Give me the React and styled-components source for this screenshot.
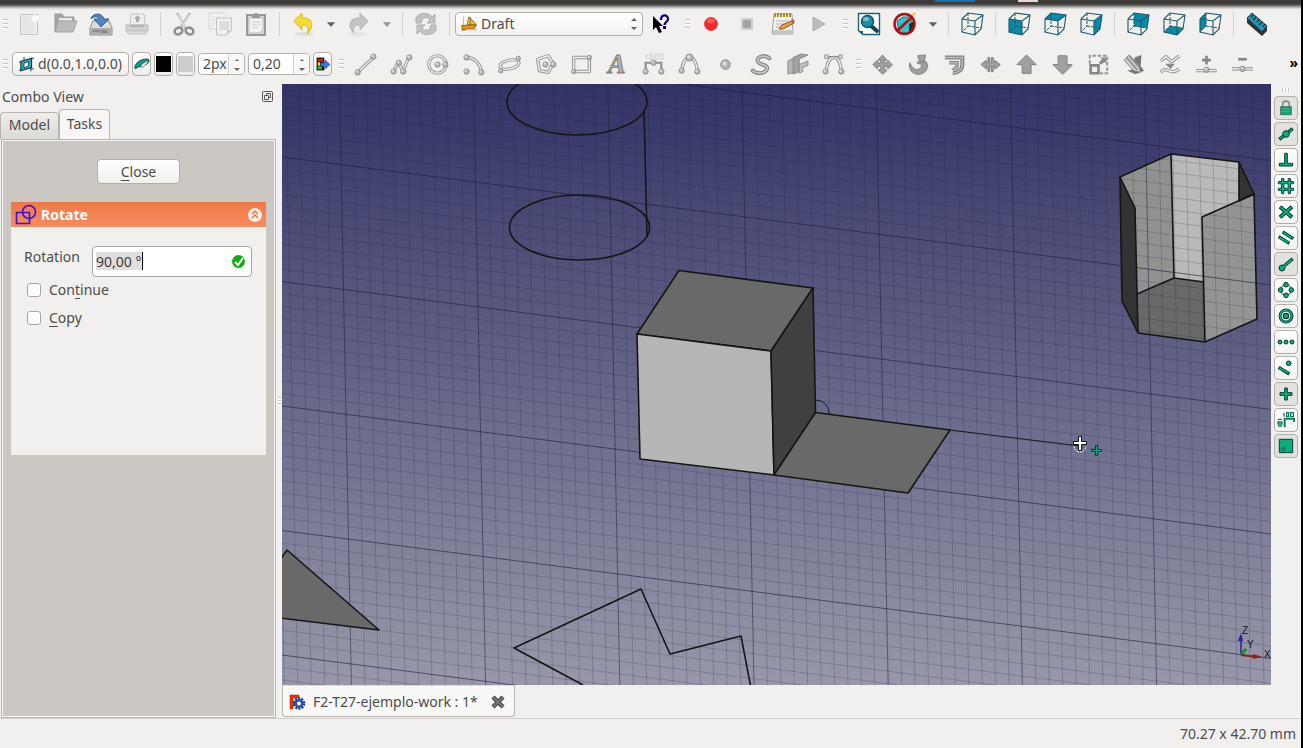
import React from 'react'
import styled, { createGlobalStyle } from 'styled-components'

const GlobalStyle = createGlobalStyle`
  * {
    box-sizing: border-box;
  }

  body {
    margin: 0;
    background: #f1f0ee;
    color: #4c4c4c;
    font: 14px/20px 'Noto Sans', 'Open Sans', sans-serif;
  }

  button, input, select {
    margin: 0;
    padding: 0;
    color: inherit;
    font: inherit;
  }
`

const Page = styled.div`
  display: flex;
  flex-direction: column;
  min-height: 100vh;
  border-right: 2px solid #000;
`

const WindowEdge = styled.header`
  display: flex;
  height: 10px;
  margin-bottom: -4px;
  padding: 0 263px 0 0;
  justify-content: flex-end;
  background: linear-gradient(#3c3b37 4px, #7d7c79 6px, #d0cfcd 8px, #f1f0ee 10px);
`

const EdgeMark = styled.span`
  width: ${props => props.width}px;
  height: 2px;
  margin-left: ${props => props.gap || 0}px;
  background: ${props => props.color};
`

const Toolbars = styled.div`
  display: flex;
  align-items: center;
  height: ${props => props.height}px;
  padding-top: ${props => props.$drop || 0}px;
  gap: ${props => props.gap}px;
`

const ToolGroup = styled.div`
  display: flex;
  align-items: center;
`

const Handle = styled.span`
  flex: none;
  width: 5px;
  height: 11px;
  margin: 0 3px;
  background: repeating-linear-gradient(#c4c2bf 0 1px, #fff 1px 2px, transparent 2px 4px);
`

const Separator = styled.span`
  flex: none;
  width: 1px;
  height: 24px;
  margin: 0 5px;
  background: #d5d3d0;
`

const ToolButton = styled.button`
  display: flex;
  flex: none;
  align-items: center;
  justify-content: center;
  width: ${props => props.$narrow ? 20 : 36}px;
  height: 36px;
  border: 0;
  background: none;
`

const Svg = styled.svg`
  display: block;
  flex: none;
  overflow: visible;
`

const Combo = styled.label`
  display: flex;
  align-items: center;
  width: 188px;
  height: 24px;
  padding: 0 5px;
  gap: 4px;
  border: 1px solid #b3afaa;
  border-radius: 4px;
  background: linear-gradient(#fff, #f3f2f1);

  select {
    flex: 1;
    border: 0;
    appearance: none;
    background: none;
    outline: 0;
  }
`

const DraftOptions = styled.div`
  display: flex;
  align-items: center;
  gap: 3px;
  margin: 0 2px 0 1px;
`

const OptionButton = styled.button`
  display: flex;
  align-items: center;
  justify-content: center;
  width: ${props => props.width || 19}px;
  height: 24px;
  gap: 4px;
  border: 1px solid #b3afaa;
  border-radius: 4px;
  background: linear-gradient(#fff, #eeedeb);
  white-space: nowrap;
`

const Swatch = styled.span`
  width: 15px;
  height: 16px;
  background: ${props => props.color};
`

const Spin = styled.div`
  display: flex;
  width: ${props => props.width}px;
  height: 22px;
  border: 1px solid #b3afaa;
  border-radius: 4px;
  background: #fff;
  overflow: hidden;

  input {
    flex: 1;
    min-width: 0;
    padding-left: 4px;
    border: 0;
    background: none;
    outline: 0;
  }
`

const Stepper = styled.div`
  display: flex;
  flex-direction: column;
  width: 16px;
  border-left: 1px solid #d5d3d0;
  background: #f8f7f6;

  button {
    display: flex;
    flex: 1;
    align-items: center;
    justify-content: center;
    border: 0;
    background: none;
  }
`

const MoreButton = styled.button`
  margin-left: auto;
  padding: 0 3px 2px;
  border: 0;
  background: none;
  color: #000;
  font-weight: bold;
`

const Workspace = styled.main`
  display: flex;
  flex: 1;
`

const Sidebar = styled.aside`
  display: flex;
  flex-direction: column;
  width: 276px;
`

const SidebarTitle = styled.div`
  display: flex;
  align-items: center;
  justify-content: space-between;
  height: 25px;
  padding: 0 3px 0 2px;
`

const DockButton = styled.button`
  display: flex;
  border: 0;
  background: none;
`

const Tabs = styled.div`
  display: flex;
  align-items: flex-end;
  height: 30px;
`

const Tab = styled.button`
  width: ${props => props.$active ? 51 : 59}px;
  height: ${props => props.$active ? 31 : 27}px;
  margin-bottom: ${props => props.$active ? -1 : 0}px;
  padding-bottom: 2px;
  border: 1px solid #b8b4b0;
  border-bottom: 0;
  border-radius: 4px 4px 0 0;
  background: ${props => props.$active ? '#f7f6f5' : 'linear-gradient(#eeedeb, #dcdad7)'};
`

const Pane = styled.section`
  display: flex;
  flex: 1;
  flex-direction: column;
  margin-left: 1px;
  padding: 19px 8px;
  align-items: stretch;
  border: 1px solid #b8b4b0;
  box-shadow: inset 0 0 0 1px #f7f6f5;
  background: #cbc8c4;
`

const CloseButton = styled.button`
  align-self: center;
  width: 83px;
  height: 25px;
  border: 1px solid #b3afaa;
  border-radius: 4px;
  background: linear-gradient(#fff, #f1f0ee);

  span {
    text-decoration: underline;
    text-underline-offset: 3px;
  }
`

const TaskBox = styled.div`
  height: 253px;
  margin: 18px 1px 0;
  background: #f1f0ee;
`

const TaskHeader = styled.div`
  display: flex;
  align-items: center;
  height: 25px;
  padding: 0 3px 0 4px;
  gap: 4px;
  background: linear-gradient(#f07746, #f68c62);
  color: #fff;
  font-weight: bold;

  button {
    display: flex;
    margin-left: auto;
    border: 0;
    background: none;
  }
`

const TaskForm = styled.form`
  display: grid;
  padding: 19px 14px 0 13px;
`

const Field = styled.div`
  display: flex;
  justify-content: space-between;
  height: 30px;
  line-height: 22px;
`

const AngleBox = styled.div`
  display: flex;
  align-items: center;
  width: 160px;
  height: 31px;
  padding: 0 5px 0 3px;
  border: 1px solid #aaa7a2;
  border-radius: 4px;
  background: #fff;

  input {
    flex: 1;
    min-width: 0;
    border: 0;
    outline: 0;
    color: #3c3c3c;
    background: linear-gradient(#000, #000) 46px 1px / 1px 18px no-repeat, linear-gradient(#e0dfdd, #e0dfdd) 0 1px / 46px 18px no-repeat;
  }
`

const Check = styled.label`
  display: flex;
  align-items: center;
  height: 28px;
  padding-left: 3px;
  gap: 8px;

  input {
    width: 14px;
    height: 14px;
    appearance: none;
    border: 1px solid #a9a6a2;
    border-radius: 3px;
    background: #fff;
  }

  span span {
    text-decoration: underline;
    text-underline-offset: 3px;
  }
`

const Splitter = styled.div`
  display: flex;
  align-items: center;
  justify-content: center;
  width: 6px;

  &::after {
    content: '';
    width: 3px;
    height: 9px;
    background: repeating-linear-gradient(#c4c2bf 0 1px, #fff 1px 3px);
  }
`

const Documents = styled.div`
  display: flex;
  flex: 1;
  flex-direction: column;
  min-width: 0;
`

const Viewport = styled.svg`
  display: block;
  flex: 1;
  width: 100%;
  min-height: 601px;
  background: linear-gradient(#333366, #9898aa);
`

const DocTab = styled.div`
  display: flex;
  align-items: center;
  width: 233px;
  height: 32px;
  margin-bottom: 1px;
  padding: 2px 9px 0 6px;
  border: 1px solid #b8b4b0;
  border-top-color: #dcdad7;
  border-radius: 0 0 4px 4px;
  background: #f8f8f7;
  white-space: nowrap;

  span {
    margin-left: 8px;
  }

  button {
    display: flex;
    margin-left: auto;
    border: 0;
    background: none;
  }
`

const SnapBar = styled.nav`
  display: flex;
  flex-direction: column;
  align-items: center;
  width: 30px;
  gap: 2px;
`

const SnapHandle = styled.span`
  width: 8px;
  height: 4px;
  margin: 4px 0 2px;
  background: repeating-linear-gradient(90deg, #c4c2bf 0 1px, #fff 1px 3px);
`

const SnapButton = styled.button`
  display: flex;
  align-items: center;
  justify-content: center;
  width: 24px;
  height: 24px;
  border: 1px solid #b3afaa;
  border-radius: 4px;
  background: ${props => props.$on ? '#e3e1de' : 'linear-gradient(#fff, #f5f4f3)'};
`

const StatusBar = styled.footer`
  height: 30px;
  padding: 5px 5px 4px;
  border-top: 1px solid #d3d0cd;
  text-align: right;
`

const Icon = ({ size = 24, children }) => (
  <Svg width={size} height={size} viewBox='0 0 24 24' fill='none' aria-hidden='true'>
    {children}
  </Svg>
)

// a shaded ball that marks a control point of a draft tool
const Ball = ({ x, y, r = 3 }) => (
  <g>
    <circle cx={x} cy={y} r={r} fill='#b9b9b9' stroke='#858585' />
    <circle cx={x - 1} cy={y - 1} r={r / 2.5} fill='#e6e6e6' />
  </g>
)

// double outline: dark below, light core above
const Tube = ({ d }) => (
  <g strokeLinejoin='round'>
    <path d={d} stroke='#949494' strokeWidth='3.8' />
    <path d={d} stroke='#eee' strokeWidth='1.6' />
  </g>
)

const Solid = ({ d, fill = '#a0a0a0' }) => (
  <g>
    <path d={d} fill='#c8c8c8' transform='translate(1 1)' />
    <path d={d} fill={fill} stroke='#7d7d7d' />
  </g>
)

const Arrow = ({ color = '#66645f' }) => <Icon size={10}><path d='M2 8h20L12 19z' fill={color} /></Icon>

const UpDown = () => (
  <Svg width='6' height='12' viewBox='0 0 6 12' fill='#66645f' aria-hidden='true'>
    <path d='M0 3 3 0l3 3zM0 9l3 3 3-3z' />
  </Svg>
)

const cubeFaces = {
  axo: '',
  front: 'M2 7 15 9V23L2 20z',
  top: 'M2 7 8 1 23 3 15 9z',
  right: 'M15 9 23 3 21 17 15 23z',
  rear: 'M8 1 23 3 21 16 8 14z',
  bottom: 'M2 20 8 14 21 16 15 23z',
  left: 'M2 7 8 1V14L2 20z'
}

const Cube = ({ face }) => (
  <Icon>
    <path d={cubeFaces[face]} fill='#078ba8' />
    <path d='M2 7 8 1 23 3 21 17 15 23 2 20zM2 7 15 9 23 3M15 9V23' stroke='#1d5a68' strokeWidth='1.1' />
    <path d='M8 1V14L2 20M8 14 21 16' stroke='#1d5a68' strokeDasharray='3 1' />
  </Icon>
)

const icons = {
  new: (
    <>
      <path d='M3.5 2.5h17v20h-17z' fill='#eee' stroke='#c4c4c4' />
      <path d='M5 4h12v17H5z' fill='#e6e6e6' />
      <circle cx='18' cy='6' r='3.5' fill='#fafafa' />
    </>
  ),
  open: (
    <>
      <path d='M2 20V2h7l2 3h10v6' fill='#a6a6a6' stroke='#999' />
      <path d='M6 6h13v6H6z' fill='#e6e6e6' />
      <path d='M2 20 5 9h19l-4 11z' fill='#bbb' stroke='#a0a0a0' />
    </>
  ),
  save: (
    <>
      <path d='M4 9h16l3 7v7H1v-7z' fill='#dcdedb' stroke='#8a8c89' />
      <path d='M2 16h20v6H2z' fill='#aaaca9' />
      <path d='M4 19h7M13 18v3M15 18v3M17 18v3' stroke='#666' />
      <path d='M2 7C3 1 13 0 15 7h5l-8 8-7-8h5C8 4 5 4 2 7z' fill='#5583bd' stroke='#33619b' />
    </>
  ),
  print: (
    <>
      <path d='M6 2h13l1 11H5z' fill='#efefef' stroke='#c3c3c3' />
      <path d='M11 10V7H9l3.500-4L16 7h-2v3z' fill='#aaa' />
      <path d='M1 13h22v6H1z' fill='#d2d2d2' stroke='#bbb' />
      <path d='M5 14h14' stroke='#999' />
      <path d='M2 19h20l-1 3H3z' fill='#dedede' stroke='#c2c2c2' />
    </>
  ),
  cut: (
    <>
      <path d='M5 1 14 17M18 1 8 17' stroke='#b9b9b9' strokeWidth='2.500' />
      <path d='M5.500 3 13 15M17.500 3 10 15' stroke='#eee' />
      <ellipse cx='6.500' cy='19' rx='4' ry='3.300' stroke='#8f8f8f' strokeWidth='2.500' transform='rotate(-25 6.500 19)' />
      <ellipse cx='17.500' cy='19' rx='4' ry='3.300' stroke='#8f8f8f' strokeWidth='2.500' transform='rotate(25 17.500 19)' />
    </>
  ),
  copy: (
    <>
      <path d='M1 1h15v16H1z' fill='#f4f4f4' stroke='#d4d4d4' />
      <path d='M3 5h10M3 8h5M3 11h4M3 14h4' stroke='#ddd' />
      <path d='M8.500 6h15v12l-5 5h-10z' fill='#f1f1f1' stroke='#c3c3c3' />
      <path d='M11 9h10v9H11z' fill='#ddd' />
      <path d='m18 23 1-5h5z' fill='#ccc' />
    </>
  ),
  paste: (
    <>
      <path d='M3 3h18v20H3z' fill='#d8d8d8' stroke='#999' strokeWidth='2' />
      <path d='M5 6h14v12l-4 3H5z' fill='#f4f4f4' stroke='#bbb' />
      <path d='M8 10h9M8 13h9M8 16h6' stroke='#ccc' />
      <path d='M8 5V3h2l1-2h2l1 2h2v3H8z' fill='#999' />
    </>
  ),
  undo: (
    <>
      <ellipse cx='13' cy='22' rx='9' ry='2' fill='#e2e0dd' />
      <path d='M3 9 11 1v5c12-1 12 10 5 16 2-7 1-9-5-9v5z' fill='#f4dc35' stroke='#d6bb2a' />
    </>
  ),
  redo: (
    <>
      <ellipse cx='10' cy='22' rx='9' ry='2' fill='#e5e4e1' />
      <path d='M21 9 13 1v5C1 5 1 16 7 21c-1-6 0-8 6-8v5z' fill='#c4c4c4' stroke='#b8b8b8' />
    </>
  ),
  refresh: (
    <>
      <path d='M2 11V6C6-1 16 1 18 5l3-3v9h-8l3-3C13 4 8 5 7 11z' fill='#c2c2c2' stroke='#adadad' />
      <path d='M22 13v5c-4 7-14 5-16 1l-3 3v-9h8l-3 3c3 4 8 3 9-3z' fill='#c2c2c2' stroke='#adadad' />
    </>
  ),
  help: (
    <g transform='translate(3 2)'>
      <path d='M1 2v14l3-3 3 6 3-1-3-6h4z' fill='#000' />
      <path d='M9 6c0-6 7-6 7-1 0 3-3.500 3-3.500 6' stroke='#000082' strokeWidth='2.200' />
      <path d='M11 12h3v3h-3z' fill='#000082' />
    </g>
  ),
  record: (
    <>
      <circle cx='12' cy='12' r='6.500' fill='#ef2929' stroke='#e84a4a' />
      <ellipse cx='12' cy='9' rx='4' ry='2.500' fill='#f55' />
    </>
  ),
  stop: <path d='M7 7h10v10H7z' fill='#a5a5a5' stroke='#d0d0d0' strokeWidth='2' />,
  edit: (
    <>
      <path d='M3 2h18l1 20H1z' fill='#f0f0ee' stroke='#a3a3a0' />
      <path d='M2 18h20v4H2z' fill='#c7c7c4' />
      <path d='M3 3h18' stroke='#a49523' strokeWidth='4' strokeDasharray='2 1' />
      <path d='M5 9h13M5 12h8M5 15h7' stroke='#b5b5b5' />
      <path d='m8 17 3-4 10-4 2 2-11 6z' fill='#f0a33d' stroke='#80552a' />
      <path d='m20 8 2-1 2 3-2 1z' fill='#d44' />
    </>
  ),
  play: <path d='M6 5 18 12 6 19z' fill='#bdbdbd' stroke='#adadad' />,
  fit: (
    <>
      <path d='M1.500 1.500h21v21H6l-4.500-4z' fill='#fff' stroke='#1b6274' strokeWidth='1.400' />
      <path d='M1 19h5v4z' fill='#1b6274' />
      <path d='m13 13 7 6' stroke='#0a4757' strokeWidth='4' strokeLinecap='round' />
      <circle cx='10.500' cy='9.500' r='6' fill='#1b8da6' stroke='#0c5566' strokeWidth='1.500' />
      <ellipse cx='9' cy='7' rx='3' ry='2' fill='#79c3d2' />
    </>
  ),
  nodraw: (
    <>
      <path d='M4 9 10 5h9v10l-4 6H6z' fill='#26c5cf' stroke='#13757d' />
      <path d='m16 12 5-3v9l-5 4z' fill='#222' />
      <path d='m14 9 8-8' stroke='#e8c434' strokeWidth='2' />
      <circle cx='11.500' cy='12' r='10' stroke='#b90b10' strokeWidth='2.500' />
      <path d='m19 5-15 14' stroke='#b90b10' strokeWidth='2.500' />
    </>
  ),
  ruler: (
    <>
      <path d='m2 7 5-5 15 13v4l-5 5L2 11z' fill='#333' />
      <path d='m2 6 5-5 15 13-5 6z' fill='#2794b3' stroke='#163944' />
      <path d='m8 3-2 2m5 0-3 3m6 0-2 2m5 0-3 3m6-1-2 3' stroke='#072a34' strokeWidth='1.300' />
    </>
  ),
  draft: (
    <>
      <path d='M4 1v22M0 21h24' stroke='#b9b7b2' strokeWidth='1.500' />
      <path d='M9 13 12 1l11 12z' fill='#f4c613' stroke='#57501a' />
      <path d='M14 2v12' stroke='#57501a' />
      <path d='M1 14h22l-3 5H8l-2 2H2z' fill='#ee9113' stroke='#7c480a' />
    </>
  ),
  plane: (
    <>
      <path d='M3 7 20 2v15L3 22z' fill='#2fb2ad' stroke='#14414c' strokeWidth='2' />
      <path d='m8 10 7-3v7l-7 4z' fill='#fff' stroke='#14414c' strokeWidth='1.500' />
      <path d='M0 8h3M8 0v6M0 21h4M19 19h5M20 2h4M19 17v6' stroke='#14414c' strokeWidth='1.500' />
    </>
  ),
  construction: (
    <>
      <path d='M1 17C3 8 14 3 22 5c2 5-3 8-7 8l-4 3c-3-1-5 1-9 3z' fill='#159b83' stroke='#125044' strokeWidth='1.500' />
      <path d='m12 12 7-4 3 1-9 8-3-1z' fill='#fff' stroke='#125044' />
    </>
  ),
  apply: (
    <>
      <path d='M1 1h13v22H1z' fill='#111' />
      <path d='M3 3h9v5H3z' fill='#e01616' />
      <path d='M3 9h4v6H3z' fill='#e5d91e' />
      <path d='M3 16h7v5H3z' fill='#25c835' />
      <path d='M8 10h7V5l9 8-9 8v-5H8z' fill='#3c79dc' stroke='#15367b' />
    </>
  ),
  line: <><Tube d='M4 20 21 4' /><Ball x={3} y={21} /><Ball x={21} y={3} /></>,
  wire: <><Tube d='M3 20 8 10 14 19 20 4' /><Ball x={3} y={20} /><Ball x={9} y={10} /><Ball x={14} y={20} /><Ball x={21} y={4} /></>,
  circle: <><circle cx='12' cy='12' r='10' stroke='#929292' strokeWidth='3.600' /><circle cx='12' cy='12' r='10' stroke='#eee' strokeWidth='1.600' /><Ball x={12} y={12} /><Ball x={21} y={12} /></>,
  arc: <><Tube d='M4 4c10 0 16 8 17 16' /><Ball x={4} y={4} /><Ball x={4} y={20} /><Ball x={21} y={21} /></>,
  ellipse: <><ellipse cx='12' cy='12' rx='11' ry='5' stroke='#929292' strokeWidth='3.600' transform='rotate(-12 12 12)' /><ellipse cx='12' cy='12' rx='11' ry='5' stroke='#eee' strokeWidth='1.600' transform='rotate(-12 12 12)' /><Ball x={2} y={19} r={2.5} /><Ball x={22} y={5} r={2.5} /></>,
  polygon: <><Tube d='M3 6 15 2 21 11 15 21 5 19z' /><Ball x={12} y={12} /><Ball x={21} y={12} /></>,
  rect: <><Tube d='M3 4h18v16H3z' /><Ball x={3} y={20} r={2.5} /><Ball x={21} y={4} r={2.5} /></>,
  text: <text x='1' y='22' fontFamily='Liberation Serif, serif' fontSize='30' fontWeight='bold' fontStyle='italic' fill='#b4b4b4' stroke='#777'>A</text>,
  dimension: <><path d='M3 21V10h18v11' stroke='#909090' strokeWidth='2.500' /><path d='M4 0v6m4-6h3v6H8zm6 0h3v6h-3zm6 0h3v6h-3z' stroke='#c9c9c9' /><Ball x={3} y={20} /><Ball x={21} y={20} /><Ball x={12} y={10} /></>,
  bspline: <><Tube d='M3 19C4 12 6 4 12 4s8 8 9 15' /><Ball x={3} y={19} /><Ball x={12} y={4} r={4} /><Ball x={21} y={20} /></>,
  point: <><circle cx='12' cy='12' r='5.500' fill='#b0b0b0' stroke='#8b8b8b' /><circle cx='11' cy='11' r='2.500' fill='#dedede' /></>,
  shape: (
    <g strokeLinecap='round'>
      <path d='M21 5C16 0 5 3 8 9c2 4 13 3 10 9-3 5-12 5-16 1' stroke='#808080' strokeWidth='4.500' />
      <path d='M21 5C16 0 5 3 8 9c2 4 13 3 10 9-3 5-12 5-16 1' stroke='#c9c9c9' strokeWidth='2' />
    </g>
  ),
  face: <><path d='M1 8 13 2v18L1 23z' fill='#b6b6b6' stroke='#888' /><path d='m7 4 9-4 8 1-10 5v14l-7 3z' fill='#a2a2a2' stroke='#888' /><path d='m14 12 10-4v5l-6 2v5l-4 2z' fill='#c1c1c1' stroke='#888' /></>,
  bezier: <><Tube d='M3 20C5 14 5 5 12 4s8 9 9 15' /><path d='M5 3h14' stroke='#8b8b8b' strokeWidth='1.500' /><path d='M2 1h4v4H2zM18 1h4v4h-4z' fill='#ddd' stroke='#8b8b8b' /><Ball x={3} y={20} /><Ball x={21} y={20} /></>,
  move: <Solid d='m12 1 5 6h-3v3h4V7l5 5-5 5v-3h-4v4h3l-5 5-5-5h3v-4H6v3l-5-5 5-5v3h4V7H7z' />,
  rotate: <Solid d='m11 2 9-1-2 9-3-2c-1 0-1 1-1 2h2c3-1 4-2 5-1 4 7-3 14-9 14C5 23 0 18 2 10c3 7 7 9 11 7 3-2 3-5 1-6-2 0-3 0-4-1l3-3z' />,
  offset: <><path d='M1 4h20v8c0 6-5 10-11 10' stroke='#808080' strokeWidth='4.500' /><path d='M6 10h9v3c0 3-3 5-5 3' stroke='#808080' strokeWidth='4' /><path d='M1 4h20v8c0 6-5 10-11 10M6 10h9v3c0 3-3 5-5 3' stroke='#bbb' strokeWidth='1.500' /></>,
  trimex: <Solid d='m1 12 6-5v3h2V4h2v6h2V4h2v6h2V7l6 5-6 5v-3h-2v6h-2v-6h-2v6H9v-6H7v3z' />,
  upgrade: <Solid d='m12 1 11 11h-6v10H7V12H1z' />,
  downgrade: <Solid d='M7 2h10v10h6L12 23 1 12h6z' />,
  scale: <><path d='M2 11V2h20v20h-8' stroke='#929292' strokeWidth='2.200' strokeDasharray='4 2' /><path d='M3 13h9v9H3z' fill='#eee' stroke='#858585' strokeWidth='3' /><path d='m12 10 4-4-2-2h7v7l-2-2-4 3z' fill='#8a8a8a' /></>,
  modify: <><path d='m12 4 8-3-1 13 4 5-10 4-9-4 7-2z' fill='#777' /><path d='m0 7 6-6 11 12 2 8-8-2z' fill='#ccc' stroke='#808080' /><path d='m3 4 12 14M6 2l11 13' stroke='#888' strokeWidth='1.500' /></>,
  spline: <><Tube d='m1 8 6-5 6 6 9-7' /><path d='M6 11h11l-5 6z' fill='#888' /><Tube d='M1 21c7-9 10 5 21-4' /></>,
  add: <><path d='M12 2v10M7 7h10' stroke='#858585' strokeWidth='3' /><Tube d='M0 19h24' /><Ball x={12} y={18} /></>,
  remove: <><path d='M7 6h10' stroke='#858585' strokeWidth='3' /><Tube d='M0 17h24' /><Ball x={12} y={17} /></>
}

// snap symbols share one green fill with a dark outline
const snaps = [
  ['Lock', true, <><path d='M7 11V7c0-7 10-7 10 0v4' stroke='#858a86' strokeWidth='2.500' /><path d='M4 10h16v12H4z' fill='#13a176' stroke='#155c46' /><path d='M6 13h12M6 17h12' stroke='#54c69d' /></>],
  ['Midpoint', true, <><path d='M2 20 22 4' stroke='#063d30' strokeWidth='5' /><path d='M3 19 21 5' stroke='#0bad7e' strokeWidth='2.500' /><circle cx='12' cy='12' r='5' fill='#0bad7e' stroke='#063d30' strokeWidth='1.500' /></>],
  ['Perpendicular', false, <path d='M10 2h4v15h8v4H2v-4h8z' fill='#0bad7e' stroke='#063d30' strokeWidth='1.500' />],
  ['Grid', false, <><path d='M7 2v20M17 2v20M2 7h20M2 17h20' stroke='#063d30' strokeWidth='5' strokeLinecap='round' /><path d='M7 2v20M17 2v20M2 7h20M2 17h20' stroke='#0bad7e' strokeWidth='2.500' strokeLinecap='round' /></>],
  ['Intersection', false, <><path d='M3 4 21 20M21 4 3 20' stroke='#063d30' strokeWidth='6' /><path d='M4 5 20 19M20 5 4 19' stroke='#0bad7e' strokeWidth='3' /></>],
  ['Parallel', false, <><path d='M7 3 23 13M1 10 17 20' stroke='#063d30' strokeWidth='5' /><path d='M8 4 22 12M2 11 16 19' stroke='#0bad7e' strokeWidth='2.500' /></>],
  ['Endpoint', true, <><path d='M7 17 22 4' stroke='#063d30' strokeWidth='5' /><circle cx='6' cy='18' r='4.500' fill='#0bad7e' stroke='#063d30' strokeWidth='1.500' /><path d='M7 17 21 5' stroke='#0bad7e' strokeWidth='2.500' /></>],
  ['Angle', false, <><circle cx='12' cy='12' r='8' stroke='#063d30' strokeWidth='1.500' /><g fill='#0bad7e' stroke='#063d30' strokeWidth='1.500'><circle cx='12' cy='4' r='3.500' /><circle cx='20' cy='12' r='3.500' /><circle cx='12' cy='20' r='3.500' /><circle cx='4' cy='12' r='3.500' /></g></>],
  ['Center', false, <><circle cx='12' cy='12' r='9' stroke='#063d30' strokeWidth='4.500' /><circle cx='12' cy='12' r='9' stroke='#0bad7e' strokeWidth='2' /><circle cx='12' cy='12' r='4' fill='#0bad7e' stroke='#063d30' strokeWidth='2' /></>],
  ['Extension', false, <g fill='#0bad7e' stroke='#063d30' strokeWidth='1.500'><circle cx='3' cy='12' r='3' /><circle cx='12' cy='12' r='3' /><circle cx='21' cy='12' r='3' /></g>],
  ['Near', false, <><path d='M1 11 17 21' stroke='#063d30' strokeWidth='5' /><path d='M2 12 16 20' stroke='#0bad7e' strokeWidth='2.500' /><circle cx='16' cy='5' r='3.500' fill='#0bad7e' stroke='#063d30' strokeWidth='1.500' /></>],
  ['Ortho', true, <path d='M10 3h4v7h7v4h-7v7h-4v-7H3v-4h7z' fill='#0bad7e' stroke='#063d30' strokeWidth='1.500' />],
  ['Dimensions', false, <><path d='M10 23V10h14v5' stroke='#167c61' strokeWidth='3' /><path d='M9 1v6m4-6h3v6h-3zm6 0h4v6h-4zM0 11h6m-6 4h6v3H0zm0 6h6' stroke='#167c61' strokeWidth='2' /></>],
  ['Working plane', true, <><path d='M2 2h20v20H2z' fill='#0bad7e' stroke='#063d30' strokeWidth='1.500' /><circle cx='8' cy='17' r='2.500' stroke='#063d30' /></>]
]

const files = [
  ['new', 'open', 'save', 'print'],
  ['cut', 'copy', 'paste']
]
const macros = ['record', 'stop', 'edit', 'play']
const views = [['front', 'top', 'right'], ['rear', 'bottom', 'left']]
const draftTools = ['line', 'wire', 'circle', 'arc', 'ellipse', 'polygon', 'rect', 'text', 'dimension', 'bspline', 'point', 'shape', 'face', 'bezier']
const modTools = ['move', 'rotate', 'offset', 'trimex', 'upgrade', 'downgrade', 'scale', 'modify', 'spline', 'add', 'remove']

const Tool = ({ name, size }) => (
  <ToolButton type='button' aria-label={name}>
    <Icon size={size}>{icons[name]}</Icon>
  </ToolButton>
)

const ViewTool = ({ face }) => (
  <ToolButton type='button' aria-label={`${face} view`}>
    <Cube face={face} />
  </ToolButton>
)

const MenuTool = ({ label, color }) => (
  <ToolButton type='button' $narrow aria-label={label}>
    <Arrow color={color} />
  </ToolButton>
)

const range = (from, to) => Array.from({ length: to - from + 1 }, (_, i) => from + i)

const GridLines = () => (
  <g stroke='#1c1c38' strokeWidth='1'>
    {range(-36, 41).map(i => {
      const x = 742 + i * 13.42
      return <path key={i} d={`M${x} 84L${x + 12} 685`} strokeOpacity={i % 10 === 0 ? 0.5 : 0.2} />
    })}
    {range(-27, 33).map(i => {
      const y = 281.5 + i * 12.45
      return <path key={i} d={`M282 ${y}L1271 ${y + 128}`} strokeOpacity={i % 10 === 0 ? 0.6 : 0.19} />
    })}
  </g>
)

const Scene = () => (
  <Viewport viewBox='282 84 989 601' preserveAspectRatio='xMinYMin slice' fill='none' role='img' aria-label='3D view'>
    <g>
      <path d='M1120 177 1171 154 1174 278 1137 294 1135 208z' fill='#919191' />
      <path d='M1171 154 1239 162V201L1202 217 1204 282 1174 278z' fill='#bababa' />
      <path d='M1137 294 1174 278 1204 282 1205 342 1138 333z' fill='#696969' />
      <path d='M1202 217 1254 194 1257 319 1205 342z' fill='#949494' />
    </g>
    <GridLines />
    <g stroke='#151515' strokeWidth='1.600' strokeLinejoin='round'>
      <path d='M1120 177 1135 208 1138 333 1122 301zM1239 162 1254 194 1239 201z' fill='#333' />
      <path d='M1120 177 1171 154 1239 162M1171 154 1174 278 1137 294M1174 278 1204 282M1138 333 1205 342 1202 217 1254 194 1257 319 1205 342' />
      <ellipse cx='577' cy='102' rx='70' ry='33' />
      <ellipse cx='579.500' cy='227.500' rx='70' ry='32.500' />
      <path d='M644 110 647 236' />
      <path d='M679 270.500 813 288 771 351 637 334z' fill='#696969' />
      <path d='M637 334 771 351 774 475 640 459z' fill='#b6b6b6' />
      <path d='M771 351 813 288 815.500 412.500 774 475z' fill='#404040' />
      <path d='M815.500 412.500 950 430 908 493 774 475z' fill='#696969' />
      <path d='M280 560 287 550 379 630 280 618z' fill='#696969' />
      <path d='M583 685 514 648 641 589 670 654 741 636 751 688' />
    </g>
    <path d='M950 430 1080 446M816 400a13 13 0 0 1 13 14' stroke='#1b1b24' />
    <path d='M1074 446a6 6 0 0 0 12 0' stroke='#fff' strokeDasharray='2 1' />
    <path d='M1078.500 436.500h3v5h5v3h-5v6h-3v-6h-5v-3h5z' fill='#fff' stroke='#111' />
    <path d='M1095.500 445.500h2v4h4v2h-4v4h-2v-4h-4v-2h4z' fill='#0bad7e' stroke='#063d30' />
    <g strokeWidth='1.500'>
      <path d='M1241 655v-15' stroke='#22229a' />
      <path d='m1238 641 3-8 2 8z' fill='#22229a' />
      <path d='m1241 655 5-6' stroke='#228b22' strokeWidth='3' />
      <path d='m1241 655 16 2' stroke='#8b2020' strokeWidth='2' />
      <path d='m1253 654 10 3-10 2z' fill='#8b2020' />
    </g>
    <g fill='#111' fontFamily='Liberation Sans, Arial, sans-serif' fontSize='10'>
      <text x='1242' y='634'>Z</text>
      <text x='1247' y='648'>Y</text>
      <text x='1264' y='658'>X</text>
    </g>
  </Viewport>
)

const SpinBox = ({ label, value, width }) => (
  <Spin width={width}>
    <input aria-label={label} defaultValue={value} />
    <Stepper>
      <button type='button' aria-label={`${label} up`}><Svg width='6' height='3' fill='#66645f'><path d='M1 3 3 1l2 2z' /></Svg></button>
      <button type='button' aria-label={`${label} down`}><Svg width='6' height='3' fill='#66645f'><path d='m0 0 3 3 3-3z' /></Svg></button>
    </Stepper>
  </Spin>
)

const MainToolbars = () => (
  <Toolbars height={36} gap={3}>
    <ToolGroup>
      <Handle />
      {files[0].map(name => <Tool key={name} name={name} />)}
      <Separator />
      {files[1].map(name => <Tool key={name} name={name} />)}
      <Separator />
      <Tool name='undo' />
      <MenuTool label='Undo history' />
      <Tool name='redo' />
      <MenuTool label='Redo history' color='#99968f' />
      <Separator />
      <Tool name='refresh' />
      <Separator />
      <Combo>
        <Icon size={16}>{icons.draft}</Icon>
        <select aria-label='Workbench' defaultValue='Draft'>
          <option>Draft</option>
        </select>
        <UpDown />
      </Combo>
      <Tool name='help' />
    </ToolGroup>
    <ToolGroup>
      <Handle />
      {macros.map(name => <Tool key={name} name={name} />)}
    </ToolGroup>
    <ToolGroup>
      <Handle />
      <Tool name='fit' />
      <Tool name='nodraw' />
      <MenuTool label='Draw style' />
      <Separator />
      <ViewTool face='axo' />
      {views.map(group => (
        <React.Fragment key={group[0]}>
          <Separator />
          {group.map(face => <ViewTool key={face} face={face} />)}
        </React.Fragment>
      ))}
      <Separator />
      <Tool name='ruler' />
    </ToolGroup>
  </Toolbars>
)

const DraftToolbars = () => (
  <Toolbars height={42} gap={2} $drop={2}>
    <ToolGroup>
      <Handle />
      <DraftOptions>
        <OptionButton type='button' width={117}>
          <Icon size={15}>{icons.plane}</Icon>
          d(0.0,1.0,0.0)
        </OptionButton>
        <OptionButton type='button' aria-label='Construction mode'><Icon size={16}>{icons.construction}</Icon></OptionButton>
        <OptionButton type='button' aria-label='Line color'><Swatch color='#000' /></OptionButton>
        <OptionButton type='button' aria-label='Face color'><Swatch color='#ccc' /></OptionButton>
        <SpinBox label='Line width' value='2px' width={47} />
        <SpinBox label='Text size' value='0,20' width={62} />
        <OptionButton type='button' aria-label='Apply style'><Icon size={14}>{icons.apply}</Icon></OptionButton>
      </DraftOptions>
    </ToolGroup>
    <ToolGroup>
      <Handle />
      {draftTools.map(name => <Tool key={name} name={name} size={21} />)}
    </ToolGroup>
    <ToolGroup>
      <Handle />
      {modTools.map(name => <Tool key={name} name={name} size={21} />)}
    </ToolGroup>
    <MoreButton type='button' aria-label='More tools'>»</MoreButton>
  </Toolbars>
)

const ComboView = () => (
  <Sidebar>
    <SidebarTitle>
      Combo View
      <DockButton type='button' aria-label='Float panel'>
        <Svg width='11' height='11' viewBox='0 0 11 11' fill='none' stroke='#5c5b58'>
          <rect x='0.500' y='0.500' width='10' height='10' rx='1' />
          <path d='M4.500 4.500v-2h4v4h-2M2.500 4.500h4v4h-4z' />
        </Svg>
      </DockButton>
    </SidebarTitle>
    <Tabs>
      <Tab type='button'>Model</Tab>
      <Tab type='button' $active>Tasks</Tab>
    </Tabs>
    <Pane>
      <CloseButton type='button'><span>C</span>lose</CloseButton>
      <TaskBox>
        <TaskHeader>
          <Svg width='22' height='22' viewBox='0 0 22 22' fill='none' stroke='#3a12d8' strokeWidth='1.600'>
            <path d='M1.500 8.500h13v11h-13z' />
            <circle cx='14' cy='8' r='6.500' />
          </Svg>
          Rotate
          <button type='button' aria-label='Collapse'>
            <Svg width='16' height='16' viewBox='0 0 16 16' fill='none'>
              <circle cx='8' cy='8' r='7' fill='#f7eeea' />
              <path d='m5 7 3-3 3 3M5 11l3-3 3 3' stroke='#ee7547' strokeWidth='1.500' />
            </Svg>
          </button>
        </TaskHeader>
        <TaskForm>
          <Field>
            <label htmlFor='rotation'>Rotation</label>
            <AngleBox>
              <input id='rotation' defaultValue='90,00 °' />
              <Svg width='15' height='15' viewBox='0 0 15 15' fill='none'>
                <circle cx='7.500' cy='7.500' r='6.500' fill='#0fae0f' />
                <path d='m4 8 3 3 5-7' stroke='#fff' strokeWidth='2' />
              </Svg>
            </AngleBox>
          </Field>
          <Check>
            <input type='checkbox' />
            <span>Con<span>t</span>inue</span>
          </Check>
          <Check>
            <input type='checkbox' />
            <span><span>C</span>opy</span>
          </Check>
        </TaskForm>
      </TaskBox>
    </Pane>
  </Sidebar>
)

const App = () => (
  <Page>
    <GlobalStyle />
    <WindowEdge>
      <EdgeMark width={40} color='#1c72b0' />
      <EdgeMark width={20} gap={43} color='#dedcd2' />
    </WindowEdge>
    <MainToolbars />
    <DraftToolbars />
    <Workspace>
      <ComboView />
      <Splitter />
      <Documents>
        <Scene />
        <DocTab>
          <Svg width='16' height='16' viewBox='0 0 16 16' fill='none'>
            <path d='M1 1h9v3H4v3h4v3H4v5H1z' fill='#e7330f' stroke='#a91f08' strokeWidth='0.500' />
            <circle cx='10' cy='9.500' r='5' stroke='#173c8f' strokeWidth='2.500' strokeDasharray='2 1.140' />
            <circle cx='10' cy='9.500' r='3.200' fill='#fff' stroke='#2453b8' strokeWidth='2.500' />
          </Svg>
          <span>F2-T27-ejemplo-work : 1*</span>
          <button type='button' aria-label='Close document'>
            <Svg width='14' height='14' viewBox='0 0 14 14' fill='none'>
              <path d='m2 2 10 10M12 2 2 12' stroke='#4e4e4b' strokeWidth='4.500' />
              <path d='m2 2 10 10M12 2 2 12' stroke='#747471' strokeWidth='2' />
            </Svg>
          </button>
        </DocTab>
      </Documents>
      <SnapBar>
        <SnapHandle />
        {snaps.map(([name, on, drawing]) => (
          <SnapButton key={name} type='button' aria-label={name} $on={on}>
            <Icon size={16}>{drawing}</Icon>
          </SnapButton>
        ))}
      </SnapBar>
    </Workspace>
    <StatusBar>70.27 x 42.70 mm</StatusBar>
  </Page>
)

export default App
